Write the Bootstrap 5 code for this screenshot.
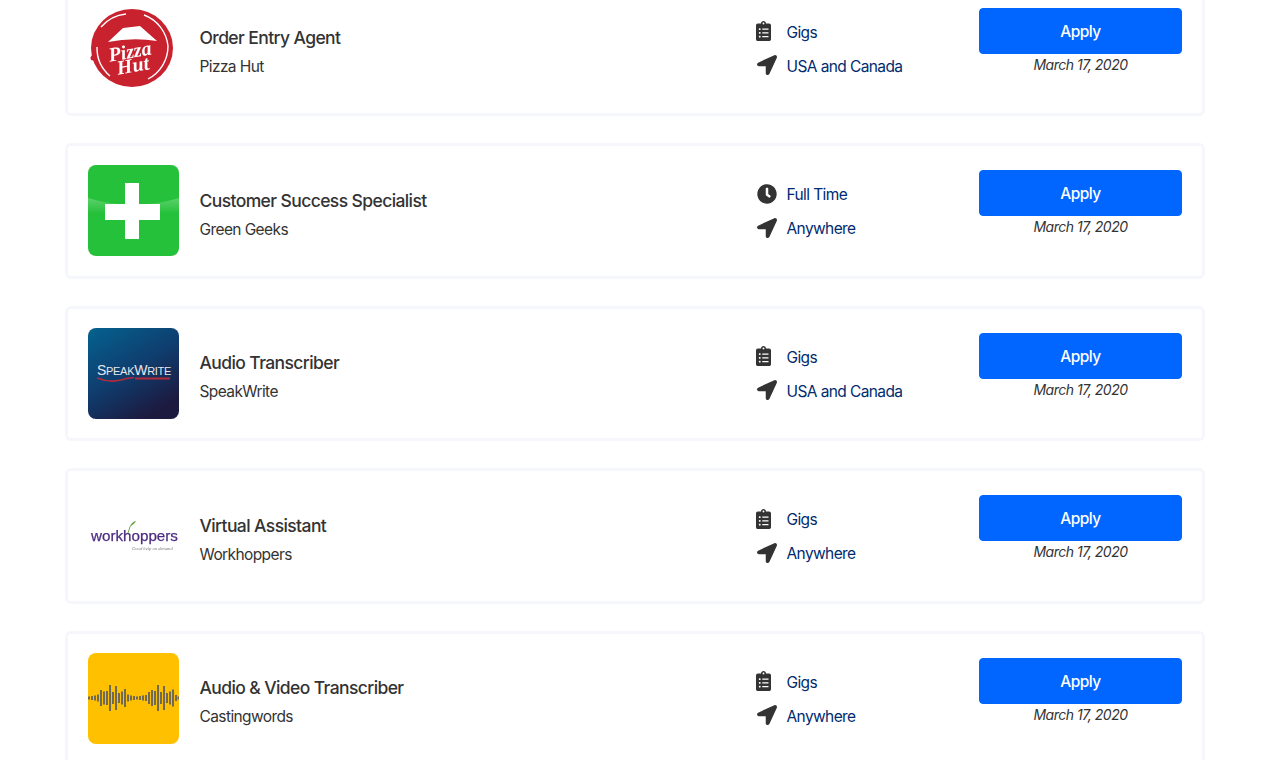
<!DOCTYPE html>
<html lang="en">
<head>
    <meta charset="UTF-8">
    <meta name="viewport" content="width=device-width, initial-scale=1.0">
    <title>Job Listings</title>
    <link href="https://cdn.jsdelivr.net/npm/bootstrap@5.3.0/dist/css/bootstrap.min.css" rel="stylesheet">
    <style>
        html, body { overflow: hidden; height: 760px; }
        body { font-family: Inter, "Noto Sans", sans-serif; background: #fff; color: #333; }

        .job-list { width: 1140px; margin: -19.1px auto 0; }
        .job-item { height: 135.5px; margin-bottom: 27px; padding: 19px 19px 0 20px; border: 3px solid #f5f7fc; border-radius: 6px; }
        .job-logo { width: 91px; height: 91px; flex: none; display: block; }
        .job-info { margin-left: 20.5px; width: 556.5px; padding-top: 19.5px; }
        .job-title { font-size: 17.5px; font-weight: 500; line-height: 32px; margin: 0; color: #333; letter-spacing: -.6px; }
        .job-company { font-size: 15.5px; line-height: 24px; margin: .7px 0 0; color: #333; letter-spacing: -.6px; }
        .job-meta { width: 223px; padding-top: 12.4px; }
        .meta-line { height: 34px; }
        .meta-icon { width: 30.5px; flex: none; }
        .meta-icon svg { display: block; fill: #333; margin-top: -2.4px; }
        .meta-icon svg.icon-wide { margin-left: 1px; }
        .meta-line a { font-size: 15.5px; color: #002b6f; text-decoration: none; letter-spacing: -.6px; }
        .job-apply { width: 203px; padding-top: 5px; }
        .apply-btn { height: 46px; line-height: 34px; font-size: 15.5px; font-weight: 500; background: #0066ff; border-color: #0066ff; border-radius: 4px; letter-spacing: -.5px; }
        .job-date { font-size: 14px; font-style: italic; line-height: 22px; color: #333; text-align: center; margin: 0; letter-spacing: -.5px; }
    </style>
</head>
<body>
    <svg width="0" height="0" class="d-block">
        <symbol id="ic-clipboard" viewBox="0 0 384 512"><path d="M336 64h-80c0-35.3-28.7-64-64-64s-64 28.7-64 64H48C21.5 64 0 85.5 0 112v352c0 26.5 21.5 48 48 48h288c26.5 0 48-21.5 48-48V112c0-26.5-21.5-48-48-48zM96 424c-13.3 0-24-10.7-24-24s10.7-24 24-24 24 10.7 24 24-10.7 24-24 24zm0-96c-13.3 0-24-10.7-24-24s10.7-24 24-24 24 10.7 24 24-10.7 24-24 24zm0-96c-13.3 0-24-10.7-24-24s10.7-24 24-24 24 10.7 24 24-10.7 24-24 24zm96-192c13.3 0 24 10.7 24 24s-10.7 24-24 24-24-10.7-24-24 10.7-24 24-24zm128 368c0 4.4-3.6 8-8 8H168c-4.4 0-8-3.6-8-8v-16c0-4.4 3.6-8 8-8h144c4.4 0 8 3.6 8 8v16zm0-96c0 4.4-3.6 8-8 8H168c-4.4 0-8-3.6-8-8v-16c0-4.4 3.6-8 8-8h144c4.4 0 8 3.6 8 8v16zm0-96c0 4.4-3.6 8-8 8H168c-4.4 0-8-3.6-8-8v-16c0-4.4 3.6-8 8-8h144c4.4 0 8 3.6 8 8v16z"/></symbol>
        <symbol id="ic-arrow" viewBox="0 0 512 512"><path d="M444.52 3.52L28.74 195.42c-47.97 22.39-31.98 92.75 19.19 92.75h175.91v175.91c0 51.17 70.36 67.17 92.75 19.19l191.9-415.78c15.99-38.39-25.59-79.97-63.97-63.97z"/></symbol>
        <symbol id="ic-clock" viewBox="0 0 512 512"><path d="M256,8C119,8,8,119,8,256S119,504,256,504,504,393,504,256,393,8,256,8Zm92.49,313h0l-20,25a16,16,0,0,1-22.49,2.5h0l-67-49.72a40,40,0,0,1-15-31.23V112a16,16,0,0,1,16-16h32a16,16,0,0,1,16,16V256l58,42.5A16,16,0,0,1,348.49,321Z"/></symbol>
        <filter id="soft"><feGaussianBlur stdDeviation="0.35"/></filter>
    </svg>

    <div class="job-list">

        <div class="job-item bg-white d-flex">
            <svg class="job-logo" viewBox="0 0 91 91">
                <g filter="url(#soft)">
                    <ellipse cx="44" cy="45" rx="41" ry="39" fill="#c8202f"/>
                    <circle cx="5" cy="55" r="2.5" fill="#c8202f"/>
                    <path d="M13 24A38 38 0 0 1 38 11M56 12A37 37 0 0 1 80 43A37 37 0 0 1 60 76M22 73A37 37 0 0 1 9 44" fill="none" stroke="#fff" stroke-width="1.4"/>
                    <path d="M20 39L35 25L52 23L69 38Q45 34 20 39Z" fill="#fff"/>
                    <text x="43" y="55" text-anchor="middle" transform="rotate(-10 43 55)" font-family="Liberation Serif, serif" font-style="italic" font-weight="700" font-size="20" fill="#fff">Pizza</text>
                    <text x="46" y="69" text-anchor="middle" transform="rotate(-10 46 69)" font-family="Liberation Serif, serif" font-style="italic" font-weight="700" font-size="20" fill="#fff">Hut</text>
                </g>
            </svg>
            <div class="job-info">
                <h5 class="job-title">Order Entry Agent</h5>
                <p class="job-company">Pizza Hut</p>
            </div>
            <div class="job-meta">
                <div class="meta-line d-flex align-items-center"><span class="meta-icon"><svg width="15" height="20"><use href="#ic-clipboard"/></svg></span><a href="#">Gigs</a></div>
                <div class="meta-line d-flex align-items-center"><span class="meta-icon"><svg class="icon-wide" width="20" height="20"><use href="#ic-arrow"/></svg></span><a href="#">USA and Canada</a></div>
            </div>
            <div class="job-apply">
                <a href="#" class="btn btn-primary apply-btn w-100">Apply</a>
                <p class="job-date">March 17, 2020</p>
            </div>
        </div>

        <div class="job-item bg-white d-flex">
            <svg class="job-logo" viewBox="0 0 91 91">
                <defs><linearGradient id="gloss" x1="0" y1="0" x2="0" y2="1"><stop offset="0" stop-color="#fff" stop-opacity=".25"/><stop offset="1" stop-color="#fff" stop-opacity="0"/></linearGradient></defs>
                <rect width="91" height="91" rx="8" fill="#26c13b"/>
                <path d="M0 33Q45 47 91 33V48H0Z" fill="url(#gloss)"/>
                <path d="M37 18H51V39H72V55H51V74H37V55H17V39H37Z" fill="#fff"/>
            </svg>
            <div class="job-info">
                <h5 class="job-title">Customer Success Specialist</h5>
                <p class="job-company">Green Geeks</p>
            </div>
            <div class="job-meta">
                <div class="meta-line d-flex align-items-center"><span class="meta-icon"><svg class="icon-wide" width="20" height="20"><use href="#ic-clock"/></svg></span><a href="#">Full Time</a></div>
                <div class="meta-line d-flex align-items-center"><span class="meta-icon"><svg class="icon-wide" width="20" height="20"><use href="#ic-arrow"/></svg></span><a href="#">Anywhere</a></div>
            </div>
            <div class="job-apply">
                <a href="#" class="btn btn-primary apply-btn w-100">Apply</a>
                <p class="job-date">March 17, 2020</p>
            </div>
        </div>

        <div class="job-item bg-white d-flex">
            <svg class="job-logo" viewBox="0 0 91 91">
                <defs><linearGradient id="speak" x1="0" y1="0" x2=".6" y2="1"><stop offset="0" stop-color="#04628f"/><stop offset=".55" stop-color="#0f3d6e"/><stop offset="1" stop-color="#1d1a40"/></linearGradient></defs>
                <rect width="91" height="91" rx="8" fill="url(#speak)"/>
                <text x="9" y="47" font-family="Liberation Sans, sans-serif" font-size="14" letter-spacing="-.3" fill="#e6e8ee">S<tspan font-size="11">PEAK</tspan>W<tspan font-size="11">RITE</tspan></text>
                <path d="M9 50Q22 55 33 52T46 50" fill="none" stroke="#b32a3a" stroke-width="1.6"/>
                <path d="M47 50.5H82" stroke="#b32a3a" stroke-width="2"/>
            </svg>
            <div class="job-info">
                <h5 class="job-title">Audio Transcriber</h5>
                <p class="job-company">SpeakWrite</p>
            </div>
            <div class="job-meta">
                <div class="meta-line d-flex align-items-center"><span class="meta-icon"><svg width="15" height="20"><use href="#ic-clipboard"/></svg></span><a href="#">Gigs</a></div>
                <div class="meta-line d-flex align-items-center"><span class="meta-icon"><svg class="icon-wide" width="20" height="20"><use href="#ic-arrow"/></svg></span><a href="#">USA and Canada</a></div>
            </div>
            <div class="job-apply">
                <a href="#" class="btn btn-primary apply-btn w-100">Apply</a>
                <p class="job-date">March 17, 2020</p>
            </div>
        </div>

        <div class="job-item bg-white d-flex">
            <svg class="job-logo" viewBox="0 0 91 91">
                <g filter="url(#soft)">
                    <path d="M40 43Q41 36 46 32" fill="none" stroke="#6fa84a" stroke-width="1"/>
                    <path d="M42 36Q45 31 48 31Q46 35 42 36Z" fill="#6fa84a"/>
                    <text x="3" y="51" font-family="Liberation Sans, sans-serif" font-size="15.2" fill="#4d2c80" stroke="#4d2c80" stroke-width=".25">workhoppers</text>
                    <text x="44" y="60" font-family="Liberation Serif, serif" font-style="italic" font-size="4.6" fill="#777">Good help on demand</text>
                </g>
            </svg>
            <div class="job-info">
                <h5 class="job-title">Virtual Assistant</h5>
                <p class="job-company">Workhoppers</p>
            </div>
            <div class="job-meta">
                <div class="meta-line d-flex align-items-center"><span class="meta-icon"><svg width="15" height="20"><use href="#ic-clipboard"/></svg></span><a href="#">Gigs</a></div>
                <div class="meta-line d-flex align-items-center"><span class="meta-icon"><svg class="icon-wide" width="20" height="20"><use href="#ic-arrow"/></svg></span><a href="#">Anywhere</a></div>
            </div>
            <div class="job-apply">
                <a href="#" class="btn btn-primary apply-btn w-100">Apply</a>
                <p class="job-date">March 17, 2020</p>
            </div>
        </div>

        <div class="job-item bg-white d-flex">
            <svg class="job-logo" viewBox="0 0 91 91">
                <rect width="91" height="91" rx="8" fill="#ffc000"/>
                <path stroke="#6f6a50" stroke-width="2" d="M1 43.5v3M4 43v4M7 42.5v5M10 41.5v7M13 37v16M16 38.5v13M19 38v14M22 32v26M25 39v12M28 33v24M31 40v10M34 38.5v13M37 36v18M40 41.5v7M43 42.5v5M46 43v4M49 43.5v3M52 43v4M55 42.5v5M58 42v6M61 39v12M64 37v16M67 38v14M70 32v26M73 39v12M76 33v24M79 40v10M82 38.5v13M85 36.5v17M88 42v6M90.5 43.5v3"/>
            </svg>
            <div class="job-info">
                <h5 class="job-title">Audio &amp; Video Transcriber</h5>
                <p class="job-company">Castingwords</p>
            </div>
            <div class="job-meta">
                <div class="meta-line d-flex align-items-center"><span class="meta-icon"><svg width="15" height="20"><use href="#ic-clipboard"/></svg></span><a href="#">Gigs</a></div>
                <div class="meta-line d-flex align-items-center"><span class="meta-icon"><svg class="icon-wide" width="20" height="20"><use href="#ic-arrow"/></svg></span><a href="#">Anywhere</a></div>
            </div>
            <div class="job-apply">
                <a href="#" class="btn btn-primary apply-btn w-100">Apply</a>
                <p class="job-date">March 17, 2020</p>
            </div>
        </div>

    </div>

    <script src="https://cdn.jsdelivr.net/npm/bootstrap@5.3.0/dist/js/bootstrap.bundle.min.js"></script>
</body>
</html>
